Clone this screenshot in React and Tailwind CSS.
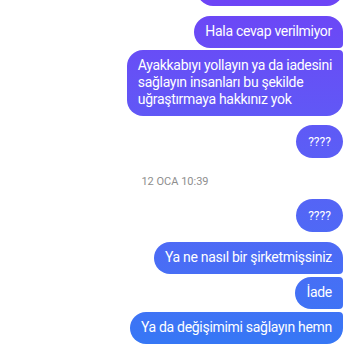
const bubble = 'bg-fixed bg-linear-to-b from-[#6d44f6] to-[#3478f5] text-white';

function Bubble({ children, className = '' }) {
  return (
    <div className={`${bubble} text-[14px] tracking-[-0.3px] leading-[17px] px-[11px] pt-[7px] pb-[8px] ${className}`}>
      {children}
    </div>
  );
}

function Ask({ className = '' }) {
  return (
    <div className={`${bubble} w-[47px] h-[33px] rounded-full flex items-center justify-center text-[12px] ${className}`}>
      ????
    </div>
  );
}

export default function App() {
  return (
    <div className="w-[350px] h-[350px] overflow-hidden bg-white font-['Roboto',sans-serif]">
      <div className="flex flex-col items-end pr-[7px]">
        <div className={`${bubble} w-[146px] h-[32px] mt-[-26px] rounded-[16px] rounded-tr-[4px]`} />

        <Bubble className="mt-[10px] rounded-[16px] rounded-br-[4px]">Hala cevap verilmiyor</Bubble>
        <Bubble className="mt-[2px] rounded-[16px] rounded-tr-[4px]">
          Ayakkabıyı yollayın ya da iadesini
          <br />
          sağlayın insanları bu şekilde
          <br />
          uğraştırmaya hakkınız yok
        </Bubble>

        <Ask className="mt-[9px]" />
      </div>

      <div className="text-center text-[11px] leading-[13px] text-[#8e8e8e] mt-[17px] mb-[11px]">
        12 OCA 10:39
      </div>

      <div className="flex flex-col items-end pr-[7px]">
        <Ask />
        <Bubble className="mt-[10px] rounded-[16px] rounded-br-[4px]">Ya ne nasıl bir şirketmişsiniz</Bubble>
        <Bubble className="mt-[3px] rounded-[16px] rounded-r-[4px]">İade</Bubble>
        <Bubble className="mt-[3px] rounded-[16px] rounded-tr-[4px]">Ya da değişimimi sağlayın hemn</Bubble>
      </div>
    </div>
  );
}
